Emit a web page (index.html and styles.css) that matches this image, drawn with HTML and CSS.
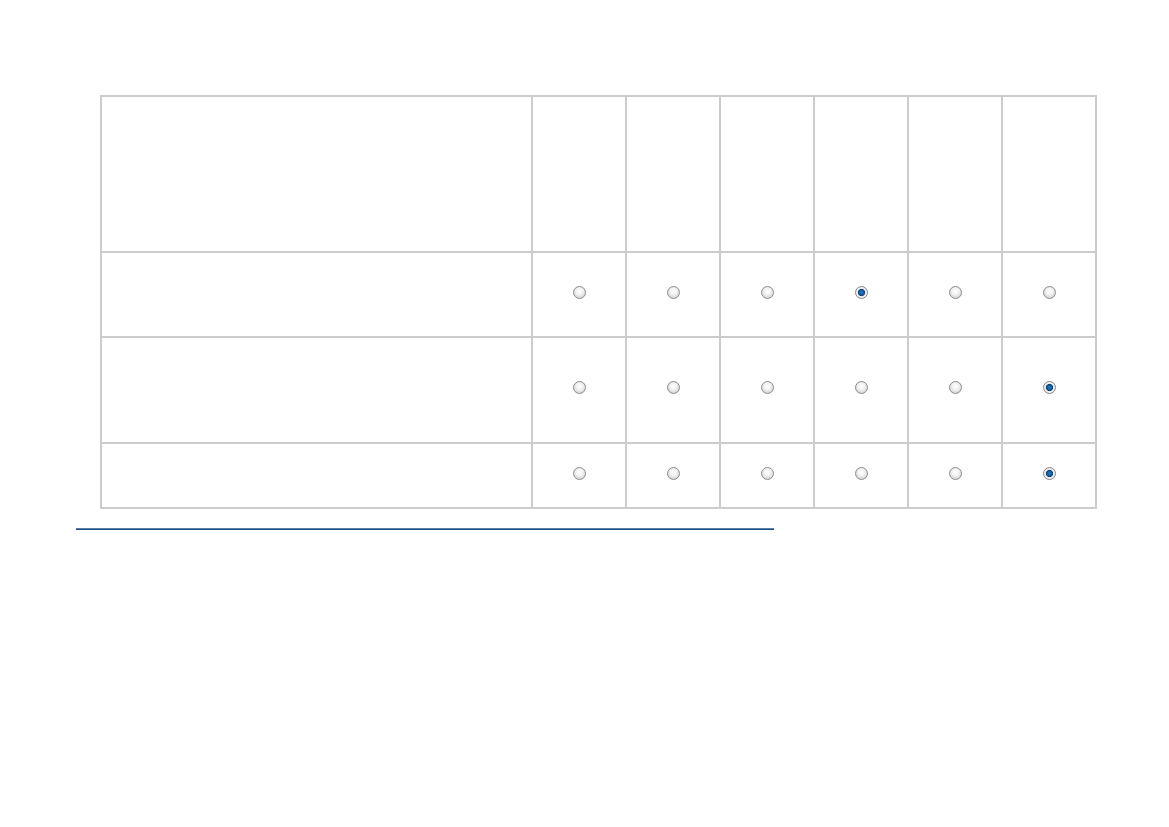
FILE: index.html
```html
<!DOCTYPE html>
<html>
<head>
<meta charset="utf-8">
<link rel="stylesheet" href="styles.css">
</head>
<body>
<div class="page">
  <table class="grid">
    <colgroup>
      <col class="c-label"><col class="c-opt"><col class="c-opt"><col class="c-opt"><col class="c-opt"><col class="c-opt"><col class="c-opt">
    </colgroup>
    <tr class="r-head">
      <td></td><td></td><td></td><td></td><td></td><td></td><td></td>
    </tr>
    <tr class="r-1">
      <td></td>
      <td><span class="radio"></span></td>
      <td><span class="radio"></span></td>
      <td><span class="radio"></span></td>
      <td><span class="radio checked"></span></td>
      <td><span class="radio"></span></td>
      <td><span class="radio"></span></td>
    </tr>
    <tr class="r-2">
      <td></td>
      <td><span class="radio"></span></td>
      <td><span class="radio"></span></td>
      <td><span class="radio"></span></td>
      <td><span class="radio"></span></td>
      <td><span class="radio"></span></td>
      <td><span class="radio checked"></span></td>
    </tr>
    <tr class="r-3">
      <td></td>
      <td><span class="radio"></span></td>
      <td><span class="radio"></span></td>
      <td><span class="radio"></span></td>
      <td><span class="radio"></span></td>
      <td><span class="radio"></span></td>
      <td><span class="radio checked"></span></td>
    </tr>
  </table>
  <div class="rule"></div>
</div>
</body>
</html>
```
FILE: styles.css
```css
html, body {
  margin: 0;
  padding: 0;
  background: #ffffff;
  font-family: "Liberation Sans", Arial, sans-serif;
}
.page {
  padding-top: 95px;
}
.grid {
  margin-left: 100px;
  width: 997px;
  border-collapse: collapse;
  border: 2px solid #cccccc;
  table-layout: fixed;
}
.grid td {
  border: 2px solid #cccccc;
  padding: 0;
  text-align: center;
  vertical-align: middle;
}
.c-label { width: 431px; }
.c-opt { width: 94px; }
.r-head td { height: 154px; }
.r-1 td { height: 83px; }
.r-2 td { height: 104px; }
.r-3 td { height: 63px; }
.radio {
  display: inline-block;
  width: 13px;
  height: 13px;
  border-radius: 50%;
  border: 1px solid #8f8f8f;
  background: radial-gradient(circle at 50% 40%, #ffffff 0%, #f4f4f4 35%, #d6d6d6 75%, #bdbdbd 100%);
  box-sizing: border-box;
  position: relative;
  top: -3px;
  vertical-align: middle;
}
.radio.checked {
  background: radial-gradient(circle at 50% 50%, #2a7cc4 0%, #105a9e 30%, #0a3f78 42%, #e8e8e8 50%, #f2f2f2 62%, #c4c4c4 100%);
  border-color: #888888;
}
.rule {
  margin-left: 76px;
  margin-top: 19px;
  width: 698px;
  height: 0;
  border-top: 1px solid #5a7fa8;
  border-bottom: 1px solid #1a4f8c;
}
```
